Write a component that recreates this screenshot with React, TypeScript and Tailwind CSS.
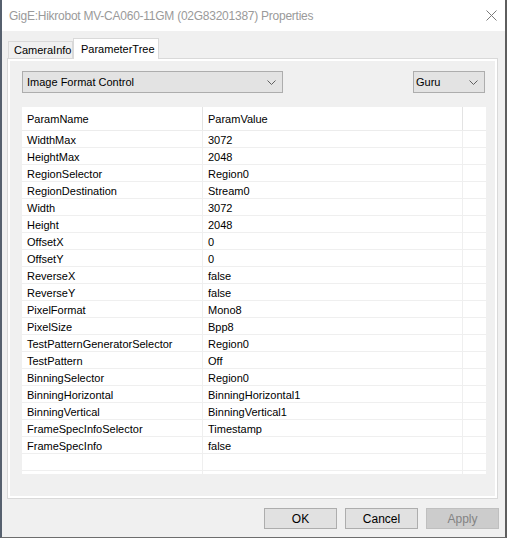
import React from "react";

const rows: [string, string][] = [
  ["WidthMax", "3072"],
  ["HeightMax", "2048"],
  ["RegionSelector", "Region0"],
  ["RegionDestination", "Stream0"],
  ["Width", "3072"],
  ["Height", "2048"],
  ["OffsetX", "0"],
  ["OffsetY", "0"],
  ["ReverseX", "false"],
  ["ReverseY", "false"],
  ["PixelFormat", "Mono8"],
  ["PixelSize", "Bpp8"],
  ["TestPatternGeneratorSelector", "Region0"],
  ["TestPattern", "Off"],
  ["BinningSelector", "Region0"],
  ["BinningHorizontal", "BinningHorizontal1"],
  ["BinningVertical", "BinningVertical1"],
  ["FrameSpecInfoSelector", "Timestamp"],
  ["FrameSpecInfo", "false"],
];

function Chevron() {
  return (
    <svg width="9" height="5" viewBox="0 0 9 5" className="shrink-0">
      <path d="M0.5 0.5 L4.5 4.5 L8.5 0.5" fill="none" stroke="#606060" strokeWidth="1" />
    </svg>
  );
}

export default function App() {
  return (
    <div
      className="w-[507px] h-[538px] flex flex-col bg-[#f0f0f0] border-l-2 border-l-[#56606e] border-r-2 border-r-[#5e5e5e] border-b border-b-[#6d6d6d] text-[11px] text-black overflow-hidden"
      style={{ fontFamily: '"Liberation Sans", Arial, sans-serif' }}
    >
      {/* Title bar */}
      <div className="h-[31px] bg-white flex items-center pl-[7px] pr-[8px] shrink-0">
        <span className="text-[12px] tracking-[-0.25px] text-[#9a9a9a] flex-1 whitespace-nowrap">
          GigE:Hikrobot MV-CA060-11GM (02G83201387) Properties
        </span>
        <svg width="11" height="11" viewBox="0 0 11 11">
          <path d="M0.5 0.5 L10.5 10.5 M10.5 0.5 L0.5 10.5" stroke="#7a7a7a" strokeWidth="1" fill="none" />
        </svg>
      </div>

      {/* Tabs */}
      <div className="h-[27px] flex items-end pl-[6px] shrink-0">
        <div className="h-[17px] w-[65px] border border-b-0 border-[#d9d9d9] bg-[#f0f0f0] flex items-center pl-[5px] pt-px whitespace-nowrap">
          CameraInfo
        </div>
        <div className="relative z-10 -mb-px h-[21px] w-[86px] border border-b-0 border-[#d9d9d9] bg-white flex items-center pl-[7px] whitespace-nowrap">
          ParameterTree
        </div>
      </div>

      {/* Panel */}
      <div className="ml-[5px] w-[491px] h-[441px] border border-[#d9d9d9] bg-white p-[2px] shrink-0">
        <div className="h-full bg-[#f0f0f0] pl-[12px] pt-[10px]">
          <div className="w-[464px] flex items-center">
            <div className="w-[261px] h-[22px] bg-[#e3e3e3] border border-[#adadad] flex items-center pl-[4px] pr-[6px]">
              <span className="flex-1 whitespace-nowrap">Image Format Control</span>
              <Chevron />
            </div>
            <div className="ml-auto mr-[1px] w-[72px] h-[22px] bg-[#e3e3e3] border border-[#adadad] flex items-center pl-[2px] pr-[6px]">
              <span className="flex-1">Guru</span>
              <Chevron />
            </div>
          </div>

          {/* Table */}
          <div className="mt-[14px] w-[464px] h-[367px] bg-white flex flex-col">
            <div className="h-[24px] flex border-b border-[#ececec] shrink-0">
              <div className="w-[181px] border-r border-[#e3e3e3] flex items-center pl-[5px] pt-px">ParamName</div>
              <div className="w-[260px] border-r border-[#e3e3e3] flex items-center pl-[5px] pt-px">ParamValue</div>
              <div className="w-[23px]" />
            </div>
            {rows.map(([n, v]) => (
              <div key={n} className="h-[17px] flex border-b border-[#efefef] shrink-0">
                <div className="w-[181px] border-r border-[#efefef] flex items-center pl-[5px] pt-[2px] whitespace-nowrap">{n}</div>
                <div className="w-[260px] border-r border-[#efefef] flex items-center pl-[5px] pt-[2px] whitespace-nowrap">{v}</div>
                <div className="w-[23px]" />
              </div>
            ))}
            <div className="h-[17px] flex border-b border-[#efefef] shrink-0">
              <div className="w-[181px] border-r border-[#efefef]" />
              <div className="w-[260px] border-r border-[#efefef]" />
              <div className="w-[23px]" />
            </div>
            <div className="h-[3px] flex shrink-0">
              <div className="w-[181px] border-r border-[#efefef]" />
              <div className="w-[260px] border-r border-[#efefef]" />
            </div>
          </div>
        </div>
      </div>

      {/* Buttons */}
      <div className="mt-[9px] flex justify-end gap-[8px] pr-[6px] shrink-0">
        <div className="w-[73px] h-[21px] bg-[#e1e1e1] border border-[#adadad] flex items-center justify-center text-[12px]">OK</div>
        <div className="w-[73px] h-[21px] bg-[#e1e1e1] border border-[#adadad] flex items-center justify-center text-[12px]">Cancel</div>
        <div className="w-[73px] h-[21px] bg-[#cccccc] border border-[#bfbfbf] flex items-center justify-center text-[12px] text-[#838383]">Apply</div>
      </div>
    </div>
  );
}
